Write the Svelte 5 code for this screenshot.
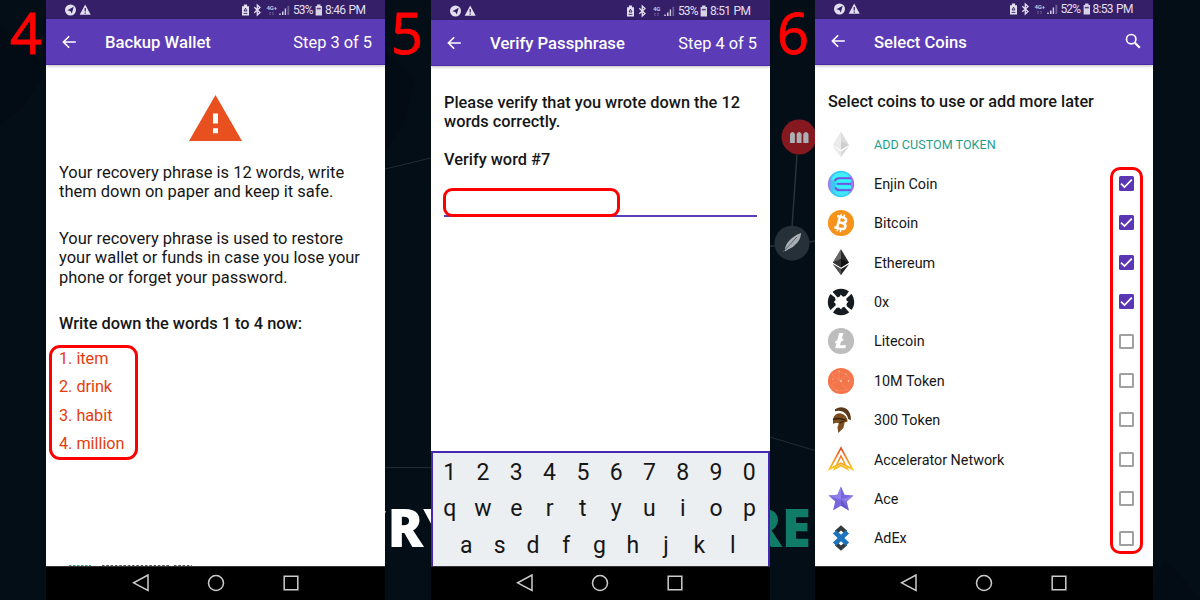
<script>
  const backup = [
    ['Your recovery phrase is 12 words, write', 'them down on paper and keep it safe.'],
    ['Your recovery phrase is used to restore', 'your wallet or funds in case you lose your', 'phone or forget your password.']
  ];
  const words = ['item', 'drink', 'habit', 'million'];
  const keys = ['1234567890', 'qwertyuiop', 'asdfghjkl'];
  const coins = [
    { id: 'enj', name: 'Enjin Coin', on: true },
    { id: 'btc', name: 'Bitcoin', on: true },
    { id: 'eth', name: 'Ethereum', on: true },
    { id: 'zrx', name: '0x', on: true },
    { id: 'ltc', name: 'Litecoin', on: false },
    { id: 'mtk', name: '10M Token', on: false },
    { id: 'sparta', name: '300 Token', on: false },
    { id: 'acc', name: 'Accelerator Network', on: false },
    { id: 'ace', name: 'Ace', on: false },
    { id: 'adx', name: 'AdEx', on: false }
  ];
</script>

{#snippet status(net, pct, time)}
  <div class="status">
    <svg class="st-left" viewBox="0 0 28 14">
      <circle cx="6.5" cy="7" r="5.5" fill="#e3dfee" />
      <path d="M3.3 7.2 9.7 3.8 7.8 10.4 6.3 8z" fill="#341f68" />
      <path d="M21.2 1.6 26.7 11.8H15.7z" fill="#e3dfee" />
      <path d="M21.2 5v3.6M21.2 9.5v1.2" stroke="#341f68" stroke-width="1.2" />
    </svg>
    <svg class="st-right" viewBox="0 0 52 14">
      <path d="M2 3.2h1.9V1.6h3.2v1.6H9v9.2H2z" fill="#e3dfee" />
      <path d="M3.6 10.4h3.8M4 8h3l-1.500-2.800z" stroke="#341f68" stroke-width=".9" fill="none" />
      <path d="M14.300 4.300 20 9.500 17.300 12V2L20 4.500 14.300 9.700" fill="none" stroke="#e3dfee" stroke-width="1.300" />
      <path d="M30 9v2.800M33 9v2.800" stroke="#8d80b0" stroke-width="1" stroke-dasharray="1.200 .5" />
      <path d="M40 12v-1.500M42.800 12V8.600" stroke="#e3dfee" stroke-width="1.400" />
      <path d="M45.400 12V5.500" stroke="#d0cae0" stroke-width="1.400" /><path d="M48.300 12V2.800" stroke="#6f5f97" stroke-width="1.800" />
      <text x={net === '4G' ? 28 : 26.500} y="7.200" class="net">{net}</text>
    </svg>
    <span class="pct">{pct}</span>
    <svg class="st-bat" viewBox="0 0 8 14">
      <path d="M.6 3h1.500V1.500h3.400V3H7v9.600H.6z" fill="#d8d3e6" /><path d="M1.800 5.600h4" stroke="#55417f" stroke-width="1.500" />
    </svg>
    <span class="time">{time}</span>
  </div>
{/snippet}

{#snippet back()}
  <svg class="back" viewBox="0 0 16 16"><path d="M14.8 8H2.6M8.2 2.2 2.4 8l5.8 5.8" fill="none" stroke="#fff" stroke-width="1.6" /></svg>
{/snippet}

{#snippet nav()}
  <div class="nav">
    <svg viewBox="0 0 18 18"><path d="M16 1v15.4L1.6 8.8z" /></svg>
    <svg viewBox="0 0 18 18"><circle cx="9" cy="9" r="7.5" /></svg>
    <svg viewBox="0 0 18 18"><path d="M2.2 2.2h13.6v13.6H2.2z" /></svg>
  </div>
{/snippet}

{#snippet coinIcon(id)}
  <svg class="coin" viewBox="0 0 28 28">
    {#if id === 'token'}
      <path d="M14 1.800 22 15 14 19.800 6 15z" fill="#dcdcdc" /><path d="M14 1.800V19.800L6 15z" fill="#ebebeb" /><path d="M14 11.500 22 15 14 19.800z" fill="#cfcfcf" />
      <path d="M6 16.600 14 21.400 22 16.600 14 27z" fill="#d9d9d9" /><path d="M6 16.600 14 21.400V27z" fill="#ebebeb" />
    {:else if id === 'eth'}
      <path d="M14 1.200 22 14.600 14 19.400 6 14.600z" fill="#2c2c2c" /><path d="M14 1.200V11L6 14.600z" fill="#666" />
      <path d="M6 14.600 14 11v8.400z" fill="#343434" /><path d="M14 11 22 14.600 14 19.400z" fill="#121212" />
      <path d="M6 16.300 14 21 22 16.300 14 26.900z" fill="#222" /><path d="M6 16.300 14 21v5.900z" fill="#555" />
    {:else if id === 'enj'}
      <defs><linearGradient id="enjg" x1="0" y1="0" x2="1" y2="0"><stop stop-color="#b070f0" /><stop offset=".16" stop-color="#3fc4f2" /><stop offset=".75" stop-color="#35d6f5" /><stop offset="1" stop-color="#c84df0" /></linearGradient></defs>
      <circle cx="14" cy="14" r="13.200" fill="url(#enjg)" />
      <path d="M4 10Q6.500 2.600 14 2.400q5.500 0 9 4.600H12q-4 .2-5.500 3.500z" fill="#3df0fa" />
      <path d="M24 8.200H12.500Q8.600 8.400 7.800 11" fill="none" stroke="#7a4fe0" stroke-width="1.800" />
      <path d="M24 9.800H13Q9 10 8.500 12.600H24zM8.500 15.300H24v3.200H13q-4-.1-4.500-3.200z" fill="#35f2fb" />
      <path d="M10 13.900h14" stroke="#7355e0" stroke-width="1.900" />
      <path d="M8.200 17.500q1.300 2.600 4.300 2.600H24" fill="none" stroke="#7a4fe0" stroke-width="1.800" />
      <path d="M5.500 19q3 3.200 8 3l8.500-.3q-3 3.800-8 4Q8 25.500 5.500 19z" fill="#3fe6f7" />
    {:else if id === 'btc'}
      <circle cx="14" cy="14" r="13.1" fill="#f7931a" />
      <g transform="rotate(14 14 14)" fill="none" stroke="#fff"><path d="M11.400 8v12M8.600 8.200h6.400q3.400.1 3.400 2.700T15 13.700h-3.400M15 13.700q4.200.1 4.200 3t-4.200 3.100H8.600" stroke-width="2.500" /><path d="M12.200 5v3M15.400 5v3M12.200 20v3M15.400 20v3" stroke-width="1.500" /></g>
    {:else if id === 'zrx'}
      <circle cx="14" cy="14" r="13.200" fill="#151b20" />
      <path d="M2.800 5.600 5 3.200 10.600 9.600 13 8.200 13.600 6.600 16 8.800 18.600 8 22.400 2.800 25 5.200 19.200 10.800 19.800 13 21.400 13.600 19.400 16 20 18.400 25.200 22.600 22.800 25 17.200 18.800 15 19.800 14.200 21.400 12 19.400 9.400 20 5.400 25.200 3 22.600 8.800 17.200 8.200 15 6.600 14.200 8.600 12 8 9.600z" fill="#fff" />
    {:else if id === 'ltc'}
      <circle cx="14" cy="14" r="13.1" fill="#bdbdbd" />
      <path d="M12.200 6h4.200l-1.700 6.100 1.900-.7-.7 2.300-1.900.7-1 3.800h6.100l-.8 3H8.200l1.400-5.400-1.800.7.700-2.500 1.800-.7z" fill="#fff" />
    {:else if id === 'mtk'}
      <circle cx="14" cy="14" r="13.1" fill="#f5754a" />
      <path d="M5 8 12 4l9 5 4 7-5 7-10 1-6-6 8-5-7-5M12 4l0 9 8-4M12 13l8 10" fill="none" stroke="#f8906c" stroke-width=".5" />
      <g fill="#ffdbce"><circle cx="14" cy="14" r=".9" /><circle cx="12" cy="4" r=".6" /><circle cx="21.500" cy="14" r=".8" /><circle cx="10" cy="23" r=".6" /><circle cx="6" cy="12" r=".6" /><circle cx="19" cy="7" r=".6" /></g>
    {:else if id === 'sparta'}
      <path d="M8 3.200Q14.200-.8 19.800 3q4.500 4 4 11.300l-2.600-1.200Q20 7.800 16 5.800 12 3.900 8 5.300z" fill="#59391a" />
      <path d="M6 12.700Q8 7 14 7.400q6 1.200 6.600 8.200l-3 1-1.200 5.300-5.100 5.200-.8-5.800 1.400-4-2.400-.6-3.500 1z" fill="#7c4e20" />
      <path d="M6 13.600Q12 11 19 14.500M12.500 17.200l4.100-2.200" stroke="#35230f" stroke-width="1.300" fill="none" />
    {:else if id === 'acc'}
      <defs><linearGradient id="accg" x1="0" y1="0" x2="0" y2="1"><stop stop-color="#e64b2a" /><stop offset="1" stop-color="#f9c621" /></linearGradient></defs>
      <path d="M2.600 24 14 3 25.400 24 14 18.200zM7.500 24 14 11l6.500 13L14 20.500z" fill="none" stroke="url(#accg)" stroke-width="1.600" />
    {:else if id === 'ace'}
      <path d="m14 1.500 3.600 8.300 8.900.7-6.700 6 2.200 9L14 20.700l-8 4.800 2.200-9-6.700-6 8.900-.7z" fill="#7868dc" />
      <path d="M14 1.500v13.300L1.500 10.500l8.900-.7zM14 14.800l12.500-4.300-6.700 6z" fill="#8f80ec" />
      <path d="m14 14.800 8 10.700-8-4.800z" fill="#6455cb" />
    {:else}
      <path d="m14 1.200 6.200 5.600-2.700 2.800L14 6.400l-3.500 3.200-2.700-2.800zM14 26.800l6.200-5.600-2.700-2.800-3.500 3.200-3.500-3.200-2.700 2.800z" fill="#333a40" />
      <path d="m9.200 6.200 4.800 4.600 4.800-4.600 3.300 3.200-4.700 4.600 4.700 4.600-3.300 3.200-4.800-4.600-4.800 4.600-3.300-3.200 4.700-4.600-4.700-4.600z" fill="#1c75bc" />
    {/if}
  </svg>
{/snippet}

<main>
  <svg class="scene" viewBox="0 0 1200 600">
    <rect width="1200" height="600" fill="#040e17" />
    <path d="M0 25 30 45 45 75 20 110 0 125M385 50l30 30-12 45-18 25M1165 560l15 16 20 24h-50z" fill="#030b14" />
    <path d="m385 169 46-11M385 467.500h46M770 437l45 13.500" stroke="#222b33" fill="none" />
    <path d="m797 155-5 72M770 246h6M808 242l8-1" stroke="#293139" stroke-width="1.500" />
    <circle cx="799" cy="137" r="17.500" fill="#86181f" />
    <path d="M790 143v-9q2.400-4 4.900 0v9zM796.700 143v-9q2.400-4 4.900 0v9zM803.300 143v-9q2.600-4 5.200 0v9z" fill="#aab0b4" />
    <circle cx="792" cy="243.200" r="17.500" fill="#263038" />
    <path d="M785 248q2-6 7-10 5-4 9-5 0 5-3.500 9.500T788 249.500l-3 2z" fill="#a9b0b5" /><path d="m783 252 14-15" stroke="#59636b" />
  </svg>

  <div class="gutter"><b class="num n4">4</b></div>

  <section class="phone">
    {@render status('4G+', '53%', '8:46 PM')}
    <header>{@render back()}<h1>Backup Wallet</h1><span class="step">Step 3 of 5</span></header>
    <div class="body backup">
      <svg class="warn" viewBox="0 0 53 46"><path d="M26.500 0 53 46H0z" fill="#e8501f" /><path d="M24 18.500h5v10h-5zM24 33.200h5v5h-5z" fill="#fff" /></svg>
      {#each backup as para}
        <p>{#each para as line}<span>{line}</span>{/each}</p>
      {/each}
      <h2>Write down the words 1 to 4 now:</h2>
      <ul>{#each words as w, i}<li>{i + 1}. {w}</li>{/each}</ul>
      <svg class="edge" viewBox="0 0 313 2"><path d="M10 1.500h22" stroke="#3c9f7b" stroke-width="1" stroke-dasharray="2.500 1.500" /><path d="M43 1.500h68M115 1.500h18" stroke="#555" stroke-width="1" stroke-dasharray="2.500 1.800" /></svg>
    </div>
    {@render nav()}
  </section>

  <div class="gutter"><b class="num n5">5</b><strong class="cry">CRY</strong></div>

  <section class="phone second">
    {@render status('4G', '53%', '8:51 PM')}
    <header>{@render back()}<h1>Verify Passphrase</h1><span class="step">Step 4 of 5</span></header>
    <div class="body verify">
      <h3><span>Please verify that you wrote down the 12</span><span>words correctly.</span></h3>
      <h4>Verify word #7</h4>
      <div class="field"><div class="entry"></div></div>
      <div class="keyboard">
        {#each keys as row}
          <div class="keys">{#each row.split('') as k}<span>{k}</span>{/each}</div>
        {/each}
      </div>
    </div>
    {@render nav()}
  </section>

  <div class="gutter"><b class="num n6">6</b><strong class="ure">RE</strong></div>

  <section class="phone third">
    {@render status('4G+', '52%', '8:53 PM')}
    <header>{@render back()}<h1>Select Coins</h1>
      <svg class="search" viewBox="0 0 16 16"><circle cx="6.200" cy="6.200" r="4.700" fill="none" stroke="#fff" stroke-width="1.700" /><path d="m9.800 9.800 5 5" stroke="#fff" stroke-width="2.100" /></svg>
    </header>
    <div class="body coins">
      <h3>Select coins to use or add more later</h3>
      <div class="row custom">{@render coinIcon('token')}<span>ADD CUSTOM TOKEN</span></div>
      {#each coins as c}
        <div class="row">{@render coinIcon(c.id)}<span>{c.name}</span>
          <i class="box" class:on={c.on}>{#if c.on}<svg viewBox="0 0 15 15"><path d="m2 7.600 3.500 3.500 7.300-7.400" fill="none" stroke="#fff" stroke-width="1.700" /></svg>{/if}</i>
        </div>
      {/each}
      <div class="mark"></div>
    </div>
    {@render nav()}
  </section>
</main>

<style>
  :global(body) { margin: 0; background: #040e17; }
  main { position: relative; width: 1200px; height: 600px; overflow: hidden; display: grid; grid-template-columns: 46px 339px 46px 339px 45px 338px 47px; font-family: Roboto, "Liberation Sans", sans-serif; color: #161616; }
  .scene { position: absolute; inset: 0; width: 1200px; height: 600px; }
  h1, h2, h3, h4, p, ul { margin: 0; padding: 0; font-weight: 500; }
  h3 span, p span { display: block; }
  .gutter { position: relative; overflow: hidden; height: 600px; }
  .num { display: block; font: 500 56px/64px "Open Sans", sans-serif; color: #f00; height: 64px; white-space: nowrap; -webkit-text-stroke: .9px #f00; }
  .n4 { padding-left: 10px; }
  .n5 { padding-left: 6px; }
  .n6 { padding-left: 7px; }
  .cry, .ure { display: block; font: 800 53px/60px "Open Sans", sans-serif; color: #fff; margin-top: 433px; white-space: nowrap; }
  .cry { margin-left: -32px; }
  .ure { color: #107c68; margin-left: -24px; }
  .phone { position: relative; height: 600px; display: flex; flex-direction: column; background: #fff; white-space: nowrap; }
  .status { height: 19px; flex: none; background: #341f68; display: flex; align-items: center; box-sizing: border-box; color: #e3dfee; font-size: 12px; }
  .second .status { height: 20px; padding-top: 1px; }
  .third .status { height: 18.500px; }
  .third .time { width: 60.500px; }
  .st-left { width: 28px; height: 14px; margin-left: 18px; }
  .st-right { width: 52px; height: 14px; margin-left: auto; }
  .pct { width: 22px; padding-left: 1px; letter-spacing: -.9px; font-size: 12px; }
  .st-bat { width: 8px; height: 14px; margin-right: 2px; }
  .time { width: 60px; letter-spacing: -.7px; word-spacing: 1px; font-size: 12px; }
  .net { font: 700 6px Roboto, sans-serif; letter-spacing: -.2px; fill: #c9c2dd; }
  header { height: 46px; flex: none; display: flex; align-items: center; background: #5c3bb6; border-bottom: 1px solid #4a2aa8; box-sizing: border-box; box-shadow: 0 1px 3px #0004; color: #fff; position: relative; }
  .back { width: 16px; height: 16px; margin-left: 15px; }
  h1 { font-size: 16.650px; margin-left: 28px; line-height: 20px; padding-top: 3px; }
  .second h1 { padding-top: 2px; }
  .step { margin-left: auto; margin-right: 13px; font-size: 16.400px; padding-top: 2px; }
  .search { width: 16px; height: 16px; margin: 0 12px 1px auto; }
  .body { flex: 1; min-height: 0; }
  .backup { padding: 30px 13px 0; display: flex; flex-direction: column; }
  .warn { display: block; flex: none; width: 53px; height: 46px; margin: 0 auto 22px; }
  p { font-size: 16.480px; line-height: 19.100px; margin-bottom: 28.200px; font-weight: 400; }
  h2 { font-size: 16.400px; line-height: 19px; margin-top: -1px; }
  ul { list-style: none; margin: 12px 0 0 -10px; width: 76px; border: 3px solid #f00; border-radius: 11px; padding: 0 0 0 7px; height: 109px; box-sizing: content-box; }
  li { font-size: 16.200px; font-weight: 400; line-height: 28.500px; color: #e53c0c; height: 28.500px; position: relative; top: -3px; }
  .edge { width: 313px; height: 2px; margin-top: auto; }
  .nav { height: 34px; flex: none; background: #000; border-top: 1px solid #333; box-sizing: border-box; display: flex; align-items: center; justify-content: center; gap: 57px; padding-bottom: 1px; }
  .second .nav { padding-right: 2px; }
  .nav svg { width: 18px; height: 18px; fill: none; stroke: #ccc; stroke-width: 1.500; }
  .verify { display: flex; flex-direction: column; padding-top: 27px; }
  h3, h4 { font-size: 16.350px; line-height: 19.200px; padding-left: 13px; }
  h4 { margin-top: 19px; }
  .field { height: 27px; margin: 18px 13px 0; border-bottom: 2px solid #5c3bb6; }
  .entry { width: 171px; height: 23px; margin-left: -1px; border: 3px solid #f00; border-radius: 9px; background: #fff; }
  .keyboard { margin-top: auto; height: 112px; border: 2px solid #4527b0; border-bottom: 0; background: #eceff1; padding: 1px 2px 0 0; }
  .keys { display: flex; justify-content: center; height: 36.500px; align-items: center; font-size: 23px; }
  .keys span { width: 33.300px; text-align: center; }
  .coins { padding: 27px 13px 0; position: relative; }
  .coins h3 { padding: 0; height: 33px; font-size: 16.250px; }
  .row { display: flex; align-items: center; height: 39.400px; font-size: 14.350px; }
  .row span { padding-top: 1.500px; }
  .coin { width: 28px; height: 28px; margin-left: -1px; margin-right: 19px; }
  .custom { color: #1f9e8b; font-size: 12.600px; }
  .box { margin-left: auto; margin-right: 6px; width: 15px; height: 15px; border: 2px solid #a0a0a0; border-radius: 1.500px; box-sizing: border-box; }
  .box.on { border: 0; background: #5a36b4; }
  .box svg { display: block; width: 15px; height: 15px; }
  .mark { position: absolute; left: 295px; top: 102px; width: 27px; height: 381px; border: 3px solid #f00; border-radius: 10px; }
</style>
